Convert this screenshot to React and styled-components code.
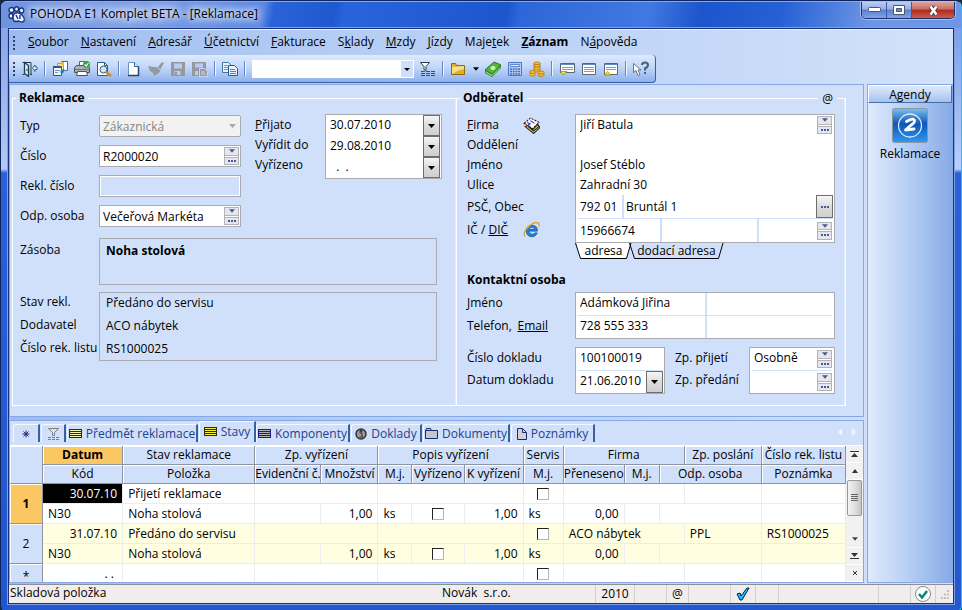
import React from "react";
import styled, { createGlobalStyle, css } from "styled-components";

const GlobalStyle = createGlobalStyle`
  *, *::before, *::after { box-sizing: border-box; }
  body { margin: 0; background: #1b2440; }
  body, button, input, select, table {
    font-family: "Open Sans", "Noto Sans", sans-serif;
    font-size: 12px;
    color: #000;
  }
  body { line-height: 16px; }
  button { border: 0; padding: 0; background: none; }
  svg { display: block; flex: none; }
`;

/* ---------- window frame ---------- */

const Window = styled.div`
  min-height: 100vh;
  display: flex;
  flex-direction: column;
  padding: 0 7px 7px;
  border: 1px solid #10245c;
  border-right-color: #19c8f0;
  border-bottom-color: #19b4e8;
  border-radius: 7px 7px 6px 6px;
  background:
    linear-gradient(#7f9fe6 0, #b4c8f4 168px, #2a60d8 172px, #1f56cc 100%) left / 7px 100% no-repeat,
    linear-gradient(#6f96e8 0, #bcd0f6 168px, #2a60d8 172px, #2458cf 100%) right / 7px 100% no-repeat,
    #2458cf;
`;

const TitleBar = styled.header`
  display: flex;
  align-items: center;
  height: 27px;
  margin: 0 -7px;
  padding: 0 7px;
  border-top: 1px solid #86a8ee;
  border-radius: 6px 6px 0 0;
  background: linear-gradient(100deg, #6f92de 0, #7fa0e6 130px, #5b86e2 260px, #2a62d8 270px, #2058cf 330px, #2a64da 340px, #1d56cc 500px, #2d66d8 512px, #4278e2 640px, #1d55cc 690px, #2560d4 770px, #6d96e6 860px, #6f96e6 100%);
`;

const AppTitle = styled.h1`
  flex: 1;
  display: flex;
  align-items: center;
  gap: 5px;
  margin: 0;
  font-size: 12px;
  line-height: 16px;
  padding-bottom: 2px;
  font-weight: 400;
  text-shadow: 0 0 6px #fff, 0 0 8px #dfe9ff, 0 0 10px #dfe9ff, 0 0 14px #c6d6fa;
`;

const WindowButtons = styled.div`
  display: flex;
  align-self: flex-start;
  margin-right: -1px;
  border: 1px solid #1c3166;
  border-top: 0;
  border-radius: 0 0 5px 5px;
  box-shadow: 0 0 0 1px #a9c1f2;
  overflow: hidden;
`;

const WindowButton = styled.button`
  display: grid;
  place-items: center;
  width: ${(p) => (p.$close ? 42 : 25)}px;
  height: 16px;
  border-right: ${(p) => (p.$close ? "0" : "1px solid #3b5ba2")};
  background: ${(p) =>
    p.$close
      ? "linear-gradient(#dba59e 0, #c96d62 45%, #ab2a20 50%, #cf5c48 100%)"
      : "linear-gradient(#bccdf2 0, #95aee6 45%, #5a7fd0 50%, #82a3ea 100%)"};
`;

const Client = styled.div`
  flex: 1;
  display: flex;
  flex-direction: column;
  border: 1px solid #17317c;
  box-shadow: 0 0 0 1px #7f9fe4;
  background: linear-gradient(90deg, #9dbbee 0, #b4cdf4 35%, #c3d7f7 70%, #d3e2fa 100%);
`;

/* ---------- menu and toolbar ---------- */

const MenuBar = styled.nav`
  display: flex;
  align-items: center;
  height: 26px;
  padding-left: 4px;
  border-top: 1px solid #e9f1fe;
`;

const Grip = styled.span`
  width: 2px;
  height: 14px;
  margin-right: ${(p) => p.$gap}px;
  background: repeating-linear-gradient(#2e4274 0 2px, transparent 2px 4px);
`;

const MenuItem = styled.button`
  padding: 0 6px 1px;
  line-height: 18px;
  font-weight: ${(p) => (p.$strong ? 700 : 400)};
`;

const Toolbar = styled.div`
  display: flex;
  align-items: center;
  align-self: flex-start;
  height: 28px;
  padding: 0 3px 0 4px;
  border-right: 1px solid #3a5f9f;
  border-bottom: 1px solid #3a5f9f;
  border-radius: 0 4px 4px 0;
  background: linear-gradient(#dfeafd 0, #c2d7f8 45%, #8db1ec 100%);
`;

const ToolButton = styled.button`
  display: grid;
  place-items: center;
  width: ${(p) => (p.$narrow ? 13 : 22)}px;
  height: 22px;
`;

const ToolSeparator = styled.span`
  width: 2px;
  height: 15px;
  margin: 0 3px;
  border-left: 1px solid #5f86c6;
  border-right: 1px solid #f0f6ff;
`;

const FilterSelect = styled.div`
  display: grid;
  width: 162px;
  height: 18px;
  margin: 0 3px;
  background: #fff;
  select {
    grid-area: 1 / 1;
    appearance: none;
    border: 0;
    width: 100%;
    height: 18px;
    padding: 0 16px 0 4px;
    background: none;
  }
  svg {
    grid-area: 1 / 1;
    justify-self: end;
    align-self: center;
    margin-right: 1px;
    background: #cfdffa;
    pointer-events: none;
  }
`;

/* ---------- work area ---------- */

const Workspace = styled.div`
  flex: 1;
  display: grid;
  grid-template-columns: minmax(0, 1fr) 86px;
  gap: 3px;
  margin-top: 1px;
`;

const MainColumn = styled.main`
  display: flex;
  flex-direction: column;
  gap: 3px;
`;

const panel = css`
  border: 1px solid #84a9e6;
  background: #d1e0fa;
`;

const FormPanel = styled.form`
  ${panel}
  display: grid;
  grid-template-columns: 445px minmax(0, 1fr);
  padding: 5px 17px 10px 2px;
`;

const Group = styled.fieldset`
  position: relative;
  min-width: 0;
  margin: 0;
  padding: 8px 8px 0 7px;
  border: 1px solid #fdfeff;
  border-left-width: ${(p) => (p.$joined ? "0" : "1px")};
  box-shadow: inset -1px 0 #e2ebfb;
`;

const Legend = styled.legend`
  margin-left: -4px;
  padding: 0 3px;
  font-weight: 700;
`;

const CornerMark = styled.span`
  position: absolute;
  top: -15px;
  right: 8px;
  padding: 0 4px;
  background: #d1e0fa;
`;

const SplitRow = styled.div`
  display: flex;
  align-items: flex-start;
  gap: 14px;
`;

const FieldStack = styled.div`
  display: flex;
  flex-direction: column;
  gap: 8px;
  width: 221px;
  padding-top: 1px;
`;

const FieldRow = styled.div`
  display: grid;
  grid-template-columns: 79px minmax(0, 1fr);
  align-items: center;
  height: 22px;
`;

const Label = styled.label`
  white-space: nowrap;
`;

const Box = styled.div`
  display: flex;
  align-items: stretch;
  height: 22px;
  border: 1px solid #a9abb0;
  border-radius: ${(p) => (p.$disabled ? 2 : 0)}px;
  padding: ${(p) => (p.$empty ? 0 : 1)}px;
  background: ${(p) => (p.$disabled ? "#f2f2f2" : p.$empty ? "#d1e0fa" : "#fff")};
  box-shadow: ${(p) => (p.$empty ? "inset 0 0 0 1px #fff" : "none")};
`;

const TextInput = styled.input`
  flex: 1;
  min-width: 0;
  width: 100%;
  border: 0;
  outline: 0;
  padding: 0 2px;
  background: transparent;
`;

const TypeSelect = styled.select`
  appearance: none;
  flex: 1;
  border: 0;
  padding: 0 2px;
  background: transparent;
  color: #858585;
  opacity: 1;
`;

const SelectArrow = styled.span`
  display: grid;
  place-items: center;
  width: 14px;
`;

const Dates = styled.div`
  display: grid;
  grid-template-columns: 70px 117px;
`;

const LabelColumn = styled.div`
  display: grid;
  align-content: start;
  align-items: center;
  padding-top: 1px;
  grid-template-rows: ${(p) => p.$rows};
`;

const Sheet = styled.div`
  display: grid;
  min-width: 0;
  border: 1px solid #a9abb0;
  background: #fff;
  padding: 0 2px;
  grid-template-rows: ${(p) => p.$rows};
  input { padding-bottom: ${(p) => (p.$raised ? 3 : 1)}px; }
`;

const SheetRow = styled.div`
  display: grid;
  min-width: 0;
  grid-template-columns: ${(p) => p.$cols || "minmax(0, 1fr)"};
  border-top: ${(p) => (p.$ruled ? "1px solid #d1e0fa" : "0")};
  > * + input { border-left: 2px solid #d1e0fa; }
`;

const DropButton = styled.button`
  display: grid;
  place-items: center;
  width: 17px;
  margin-right: -1px;
  border: 1px solid #6d6d6d;
  background: linear-gradient(#f6f6f6, #dcdcdc 50%, #cfcfcf);
`;

const SpinBox = styled.span`
  display: flex;
  flex-direction: column;
  gap: 1px;
  align-self: ${(p) => (p.$top ? "start" : "center")};
  width: 15px;
  height: 18px;
  margin-top: ${(p) => (p.$top ? 1 : 0)}px;
  border-left: 1px solid #b4b4b8;
  border-right: 1px solid #b4b4b8;
  button {
    flex: 1;
    display: grid;
    place-items: center;
    border-top: 1px solid #b4b4b8;
    border-bottom: 1px solid #b4b4b8;
    background: #e6e7ec;
  }
`;

const InfoGrid = styled.div`
  display: grid;
  grid-template-columns: 79px minmax(0, 1fr);
  row-gap: 7px;
  margin-top: 11px;
  width: 417px;
`;

const InfoLabels = styled.div`
  display: flex;
  flex-direction: column;
  line-height: 23px;
  white-space: nowrap;
`;

const InfoBox = styled.div`
  padding: 0 6px;
  border: 1px solid #a9abb0;
  line-height: 23px;
  height: ${(p) => (p.$tall ? 69 : 47)}px;
  font-weight: ${(p) => (p.$strong ? 700 : 400)};
  white-space: nowrap;
`;

const InfoLine = styled.div`
  height: 23px;
  margin-top: ${(p) => (p.$first ? -2 : 0)}px;
`;

const CustomerGrid = styled.div`
  display: grid;
  grid-template-columns: 108px minmax(0, 1fr);
  margin: 0 2px ${(p) => p.$gap || 0}px 3px;
`;

const LabelWithIcon = styled.div`
  display: flex;
  align-items: center;
  width: ${(p) => (p.$wide ? 81 : 73)}px;
  white-space: nowrap;
  justify-content: space-between;
`;

const InlineLink = styled.a`
  color: #000;
  text-decoration: underline;
`;

const NoteTabs = styled.div`
  display: flex;
  margin: 0 0 12px 111px;
`;

const NoteTab = styled.button`
  display: grid;
  justify-items: center;
  width: ${(p) => p.$w}px;
  height: 17px;
  margin-right: -3px;
  line-height: 15px;
  svg, span { grid-area: 1 / 1; }
`;

const SubHeading = styled.h2`
  margin: 0 3px 4px;
  font-size: 12px;
  line-height: 16px;
  font-weight: 700;
`;

const DocumentRow = styled.div`
  display: grid;
  grid-template-columns: 108px 90px 84px minmax(0, 1fr);
  margin: 0 2px 11px 3px;
`;

const ShiftedLabels = styled(LabelColumn)`
  padding-left: 10px;
`;

/* ---------- item list ---------- */

const ListPanel = styled.section`
  ${panel}
  flex: 1;
  display: flex;
  flex-direction: column;
`;

const TabStrip = styled.div`
  display: flex;
  align-items: flex-end;
  height: 25px;
  padding: 0 0 3px 3px;
  border-bottom: 1px solid #fff;
`;

const ListTab = styled.button`
  display: flex;
  align-items: center;
  justify-content: center;
  gap: 4px;
  width: ${(p) => p.$w}px;
  height: ${(p) => (p.$active ? 21 : 18)}px;
  margin-right: ${(p) => (p.$active ? 0 : 1)}px;
  padding-bottom: ${(p) => (p.$active ? 1 : 0)}px;
  border: 1px solid #f4f8ff;
  border-bottom: 0;
  border-right: 2px solid #3a619f;
  border-radius: 3px 0 0 0;
  color: #24418c;
  white-space: nowrap;
`;

const TabArrows = styled.span`
  display: flex;
  gap: 10px;
  margin: 0 7px 6px auto;
`;

const ListBody = styled.div`
  flex: 1;
  display: grid;
  grid-template-columns: minmax(0, 1fr) 17px;
`;

const TableViewport = styled.div`
  contain: size;
  min-height: 136px;
  overflow: hidden;
  background: #fff;
`;

const Table = styled.table`
  width: 100%;
  table-layout: fixed;
  border-collapse: separate;
  border-spacing: 0;
  line-height: 16px;
`;

const HeadCell = styled.th`
  height: 19px;
  padding: 0;
  overflow: hidden;
  white-space: nowrap;
  font-weight: ${(p) => (p.$current ? 700 : 400)};
  background: ${(p) => (p.$current ? "#fbc763" : "#d1e0fa")};
  border-right: 1px solid #8f949e;
  border-bottom: 1px solid #8f949e;
  box-shadow: inset 1px 1px #fff;
`;

const Cell = styled.td`
  height: ${(p) => p.$h || 20}px;
  padding: 0 5px;
  overflow: hidden;
  white-space: nowrap;
  text-align: ${(p) => p.$align || "left"};
  color: ${(p) => (p.$picked ? "#fff" : "#000")};
  background: ${(p) => (p.$picked ? "#000" : p.$tint ? "#fffee0" : "#fff")};
  border-right: 1px solid #ececee;
  border-bottom: 1px solid #ececee;
`;

const CheckBox = styled.input`
  appearance: none;
  display: block;
  width: 12px;
  height: 12px;
  margin: 0 auto;
  border: 1px solid #b5b5b5;
  border-top: 1px solid #222;
  border-left: 1px solid #222;
  background: #fff;
`;

const ScrollBar = styled.div`
  display: flex;
  flex-direction: column;
  align-items: center;
  background: #f1f1f2;
`;

const ScrollButton = styled.button`
  display: grid;
  place-items: center;
  width: 100%;
  height: 17px;
  border-bottom: 1px solid #fff;
`;

const ScrollThumb = styled.div`
  display: grid;
  place-items: center;
  width: 15px;
  height: 36px;
  margin-bottom: 15px;
  border: 1px solid #98989c;
  border-radius: 2px;
  background: linear-gradient(90deg, #f4f4f4, #e0e0e2 50%, #c6c6ca);
`;

/* ---------- side bar ---------- */

const SideBar = styled.aside`
  display: flex;
  flex-direction: column;
  align-items: center;
  border: 1px solid #84a9e6;
  background: linear-gradient(90deg, #dfeafd, #b9d0f5 45%, #86abe8);
`;

const SideHeading = styled.h2`
  width: 100%;
  height: 18px;
  margin: 0 0 5px;
  border: 1px solid #4d6ea5;
  border-top-color: #fff;
  border-left-color: #fff;
  background: linear-gradient(#dfeafd, #a5c2f0);
  font-size: 12px;
  line-height: 17px;
  font-weight: 400;
  text-align: center;
`;

const AgendaButton = styled.button`
  display: flex;
  flex-direction: column;
  align-items: center;
  gap: 2px;
`;

/* ---------- status bar ---------- */

const StatusBar = styled.footer`
  display: flex;
  height: 19px;
  margin-top: 1px;
  border-top: 1px solid #8d8f98;
  background: #f1edec;
  line-height: 16px;
`;

const StatusCell = styled.div`
  display: flex;
  align-items: center;
  justify-content: center;
  width: ${(p) => p.$w}px;
  border-left: 1px solid #d2cfce;
`;

const StatusText = styled.div`
  flex: 1;
  display: grid;
  grid-template-columns: 432px minmax(0, 1fr);
  padding-left: 1px;
  white-space: pre;
`;

/* ---------- drawings ---------- */

const Down = ({ fill = "#000", w = 7 }) => (
  <svg width={w} height="4" viewBox="0 0 7 4">
    <path d="M0 0h7L3.500 4z" fill={fill} />
  </svg>
);

const Dots = () => (
  <svg width="8" height="2" viewBox="0 0 8 2">
    <path d="M0 0h2v2H0zM3 0h2v2H3zM6 0h2v2H6z" fill="#47599c" />
  </svg>
);

const Icon = ({ children, size = 16 }) => (
  <svg width={size} height={size} viewBox="0 0 16 16">{children}</svg>
);

const icons = {
  door: (
    <Icon>
      <path d="M.500 1.500h8.500V13M.500 13.500h2M8 13.500h2" fill="none" stroke="#1f3d52" />
      <path d="M2.500 1.500l4 3v11l-4-3z" fill="#dfeaf0" stroke="#1f3d52" strokeWidth="1.300" />
      <path d="M5 8v2" stroke="#1f3d52" />
      <path d="M10.500 7L13 4v2h2v2.500h-2v2z" fill="#fff" stroke="#2d6680" />
    </Icon>
  ),
  agendas: (
    <Icon>
      <path d="M9.500.500h6v9h-3" fill="#fff" stroke="#3a6ab0" />
      <path d="M5.500 2.500h6v9h-6z" fill="#ffe98a" stroke="#a9a050" />
      <path d="M9 1h3v3H9zM5 4h3v2H5z" fill="#f3ba1e" />
      <path d="M1.500 5.500h8v9h-8z" fill="#eef5fc" stroke="#2e5a94" />
      <path d="M1 5h9v2H1z" fill="#2e5a94" />
      <path d="M3 9h5v1H3zM3 11h3v1H3z" fill="#6c9acb" />
      <path d="M8 11l3-3 2 1-3 4z" fill="#2c7ab5" />
    </Icon>
  ),
  printer: (
    <Icon>
      <path d="M5.500.500h6v5h-6z" fill="#fff" stroke="#59636e" />
      <path d="M.500 6.500l2-2h11l2 2v5H.500z" fill="#a9b0b8" stroke="#4a525c" />
      <path d="M1 8h14v1H1z" fill="#6b747e" />
      <path d="M3.500 10.500h9l1 4h-11z" fill="#fff" stroke="#4a525c" />
      <circle cx="12.500" cy="3.500" r="3.500" fill="#38a048" />
      <path d="M10.700 3.500l1.500 1.600L14.500 2" fill="none" stroke="#fff" strokeWidth="1.200" />
    </Icon>
  ),
  preview: (
    <Icon>
      <path d="M1.500 1.500h7l3 3v10h-10z" fill="#fff" stroke="#2e5a94" />
      <path d="M8.500 1.500v3h3" fill="none" stroke="#2e5a94" />
      <circle cx="7.500" cy="8.500" r="3.500" fill="#cfeaf3" stroke="#3d5f75" />
      <path d="M10 11l5 4" stroke="#c98f28" strokeWidth="2.400" />
    </Icon>
  ),
  page: (
    <Icon>
      <path d="M2.500 1.500h6l4 4v9h-10z" fill="#fff" stroke="#6b93c8" />
      <path d="M8.500 1.500v4h4" fill="#d5e6f8" stroke="#39649e" />
      <path d="M2 14.500h10.500v-9" fill="none" stroke="#24466f" strokeWidth="1.500" />
    </Icon>
  ),
  brush: (
    <Icon>
      <path d="M0 5l5 1 5 0 4-5 2 1-4 7v2l-6 4-1-3-3-2z" fill="#96989d" />
      <path d="M9 6l3 3" stroke="#b7cdf2" />
    </Icon>
  ),
  disk: (
    <Icon>
      <path d="M1 1h14v14H1z" fill="#96989d" />
      <path d="M4 2.500h8v5H4zM4.500 10h6v4h-6z" fill="#b7cdf2" />
      <path d="M5 11h2v3H5z" fill="#96989d" />
    </Icon>
  ),
  diskPage: (
    <Icon>
      <path d="M0 1h14v14H0z" fill="#96989d" />
      <path d="M3 2.500h8v4H3zM3 10h3v4H3z" fill="#b7cdf2" />
      <path d="M7.500 7.500h5l3 3v5h-8z" fill="#96989d" stroke="#c6d8f5" />
      <path d="M9 11h4M9 13h5" stroke="#c6d8f5" />
    </Icon>
  ),
  copy: (
    <Icon>
      <path d="M.500 1.500h6l3 3v7h-9z" fill="#e6f2fc" stroke="#41779f" />
      <path d="M2 4.500h4M2 6.500h5M2 8.500h5" stroke="#68a0c8" />
      <path d="M6.500 4.500h6l3 3v7h-9z" fill="#e6f2fc" stroke="#2e5a94" />
      <path d="M8 8.500h5M8 10.500h6M8 12.500h6" stroke="#4a88b8" />
    </Icon>
  ),
  filter: (
    <Icon>
      <path d="M.500 1.500h9l-3.500 4v4l-2-1v-3z" fill="#fff" stroke="#27424e" />
      <path d="M1 10.500h14M1 12.500h14M1 14.500h14" stroke="#2f5669" strokeDasharray="4 1" />
    </Icon>
  ),
  folder: (
    <Icon>
      <path d="M1.500 13.500v-11h4l1 2h8v9z" fill="#dfae31" stroke="#8d6c16" />
      <path d="M2 13V6l12-1v3q-6 1-12 5z" fill="#f7df86" />
    </Icon>
  ),
  money: (
    <Icon>
      <path d="M0 9L9 1l7 3-9 9z" fill="#55b53c" stroke="#2a7421" />
      <path d="M0 9v3l7 4 9-9V4l-9 9z" fill="#2f8a2a" />
      <path d="M1 11l6 3.500 8-8" fill="none" stroke="#b6e59c" />
      <ellipse cx="8" cy="7" rx="2.500" ry="2" fill="#d3f3be" />
    </Icon>
  ),
  calculator: (
    <Icon>
      <path d="M1.500 1.500h13v13h-13z" fill="#b4cdf4" stroke="#4f78c4" />
      <path d="M3.500 3.500h9v2h-9z" fill="#e4eefc" stroke="#5f86cc" />
      <path d="M3 8h10M3 10.500h10M3 13h10" stroke="#4a70bd" strokeDasharray="2 .7" strokeWidth="1.500" />
    </Icon>
  ),
  coins: (
    <Icon>
      <g fill="#f6bd3a" stroke="#b3760e" strokeWidth=".8">
        <path d="M5 2v9h6V2z" />
        <ellipse cx="8" cy="2.500" rx="3" ry="1.500" />
        <ellipse cx="8" cy="5" rx="3" ry="1.500" />
        <ellipse cx="8" cy="7.500" rx="3" ry="1.500" />
        <ellipse cx="3.500" cy="13.500" rx="3" ry="1.500" />
        <ellipse cx="3.500" cy="11" rx="3" ry="1.500" />
        <ellipse cx="12" cy="14" rx="3.300" ry="1.500" />
        <ellipse cx="12" cy="11.500" rx="3.300" ry="1.500" />
      </g>
    </Icon>
  ),
  rowsDown: (
    <Icon>
      <path d="M1.500 2.500h14v9h-14z" fill="#fff" stroke="#5c6672" />
      <path d="M2 3.500h13" stroke="#5f8bd0" />
      <path d="M3 6.500h11M3 8.500h11" stroke="#8f979f" />
      <path d="M1 10.500h7L4.500 14z" fill="#f3e524" stroke="#776f10" strokeWidth=".6" />
    </Icon>
  ),
  rows: (
    <Icon>
      <path d="M1.500 2.500h13v11h-13z" fill="#fff" stroke="#5c6672" />
      <path d="M2 3.500h12" stroke="#5f8bd0" />
      <path d="M3 6.500h10M3 8.500h10M3 10.500h10" stroke="#8f979f" />
    </Icon>
  ),
  rowsUp: (
    <Icon>
      <path d="M1.500 2.500h13v11h-13z" fill="#fff" stroke="#5c6672" />
      <path d="M2 3.500h12" stroke="#5f8bd0" />
      <path d="M3 6.500h10M3 8.500h10" stroke="#8f979f" />
      <path d="M1 14h7L4.500 10.500z" fill="#f3e524" stroke="#776f10" strokeWidth=".6" />
    </Icon>
  ),
  help: (
    <Icon>
      <path d="M.500 2.500v9l2.500-2 2 5 2-1-2-4.500h3z" fill="#fff" stroke="#4a5a6a" strokeWidth=".8" />
      <path d="M9 4q0-2.500 3-2.500t3 2.500q0 2-3 3.500v2M12 11v2" fill="none" stroke="#3d6480" strokeWidth="2" />
    </Icon>
  ),
  cards: (
    <Icon size={17}>
      <path d="M1 6l6-5 8 4-6 6z" fill="#fff" stroke="#222" strokeDasharray="2 1" />
      <path d="M4 5l3 2M7 3.500l4 2.500M5 7.500l2-2" stroke="#3344c4" />
      <path d="M2 9l3-1 4 4 5-5 2 3-6 5.500z" fill="#e4d832" stroke="#222" />
      <path d="M5 9l5 4 5-4" fill="none" stroke="#222" />
      <path d="M2 6l2 2" stroke="#d43a2a" />
    </Icon>
  ),
  browser: (
    <Icon size={17}>
      <path d="M13.500 9.500H5.500q.500 3 3.200 3 1.800 0 2.500-1.300h2.200q-1.400 3.600-5 3.600-5.200-.400-5.200-5.400Q3.500 4 8.500 4q5.200.300 5 5.500zM5.600 7.800h5.700Q11 5.700 8.500 5.700T5.600 7.800z" fill="#2a86d8" stroke="#1c5ea8" strokeWidth=".9" />
      <path d="M2 14.500Q-.500 11 5 5.500 11-.200 14.500 2q1.200 1 .200 3.200" fill="none" stroke="#e0a92a" strokeWidth="1.300" />
    </Icon>
  ),
  star: (
    <svg width="8" height="8" viewBox="0 0 8 8">
      <path d="M4 .5v7M.5 4h7M1.500 1.500l5 5M6.500 1.500l-5 5" stroke="#141c70" strokeWidth=".9" />
    </svg>
  ),
  smallFilter: (
    <svg width="13" height="12" viewBox="0 0 13 12">
      <path d="M1.500.500h10l-4 4v3h-2v-3z" fill="#e4e4e4" stroke="#7d7d7d" />
      <path d="M1 9.500h11M1 11.500h11" stroke="#7d7d7d" strokeDasharray="3 1" />
    </svg>
  ),
  info: (
    <svg width="12" height="12" viewBox="0 0 12 12">
      <circle cx="6" cy="6" r="5" fill="#9b9b9b" stroke="#333" strokeWidth="1.500" />
      <path d="M5 2.500h2v1.300H5zM4.500 5H7v3.500h1M4.500 9h3.500" fill="none" stroke="#333" />
    </svg>
  ),
  tabFolder: (
    <svg width="13" height="11" viewBox="0 0 13 11">
      <path d="M.500 2.500l1-2h4l1 2h6v8H.500zM.500 2.500h6" fill="#c3c7cf" stroke="#1a2a68" />
    </svg>
  ),
  tabPage: (
    <svg width="10" height="12" viewBox="0 0 10 12">
      <path d="M.500.500h5l4 4v7h-9zM5.500.500v4h4" fill="#d0d2d8" stroke="#1a2a68" />
    </svg>
  ),
};

const Grid = ({ fill, line = "#1a2080" }) => (
  <svg width="13" height="9" viewBox="0 0 13 9">
    <path d="M0 0h13v9H0z" fill={line} />
    <path d="M1 1h11v1H1zM1 3h11v1H1zM1 5h11v1H1zM1 7h11v1H1z" fill={fill} />
  </svg>
);

const NoteShape = ({ w, fill }) => (
  <svg width={w} height="17" viewBox={`0 0 ${w} 17`}>
    <path d={`M.500 0l5 15.500h${w - 11}L${w - 1} 0`} fill={fill} stroke="#000" />
  </svg>
);

const Logo = () => (
  <svg width="17" height="17" viewBox="0 0 17 17">
    <g fill="#edf2ff" stroke="#1d3480" strokeWidth="1.400">
      <ellipse cx="3.500" cy="4" rx="2.500" ry="2.500" />
      <ellipse cx="8.500" cy="3" rx="2" ry="2.200" />
      <ellipse cx="13.500" cy="4.500" rx="2.200" ry="2.500" />
      <ellipse cx="3" cy="10" rx="2" ry="2.500" />
      <path d="M6 8q4-3 8 1 3 3 2 6-2 2-5 0-3 1-5 0-2-3 0-7z" />
      <path d="M8 9l2 4M12 9v4" fill="none" />
    </g>
  </svg>
);

const AgendaIcon = () => (
  <svg width="36" height="35" viewBox="0 0 36 35">
    <defs>
      <linearGradient id="agenda" x2="0" y2="1">
        <stop stopColor="#7cc0f2" />
        <stop offset=".45" stopColor="#0e56b8" />
        <stop offset="1" stopColor="#2f9bf0" />
      </linearGradient>
    </defs>
    <rect x=".5" y=".5" width="35" height="34" rx="2" fill="url(#agenda)" stroke="#8c96a3" />
    <circle cx="18" cy="17.500" r="11.500" fill="none" stroke="#dcebfb" strokeWidth="1.300" />
    <path d="M14.500 13.500l3-1.500q5-2 5 1 0 2-4 4.500l-5 4.500 8.500-1" fill="none" stroke="#fff" strokeWidth="2.800" strokeLinecap="round" strokeLinejoin="round" />
  </svg>
);

const CheckMark = () => (
  <svg width="14" height="14" viewBox="0 0 14 14">
    <path d="M1 7l3-1 1 3 6-8h2L6 13H4z" fill="#1ac3ea" stroke="#0b1566" />
  </svg>
);

const StatusOk = () => (
  <svg width="16" height="16" viewBox="0 0 16 16">
    <circle cx="8" cy="8" r="7.500" fill="#fff" stroke="#7e8c8c" />
    <path d="M4 8l3 3.500L12 5" fill="none" stroke="#0e8378" strokeWidth="2.500" />
  </svg>
);

const SizeGrip = () => (
  <svg width="9" height="9" viewBox="0 0 9 9">
    <path d="M7 0h2v2H7zM4 3.500h2v2H4zM7 3.500h2v2H7zM1 7h2v2H1zM4 7h2v2H4zM7 7h2v2H7z" fill="#c2bfbd" />
  </svg>
);

/* ---------- composed controls ---------- */

const Spin = ({ name, top }) => (
  <SpinBox $top={top}>
    <button type="button" aria-label={`${name}: nabídka`}><Down fill="#47599c" w={6} /></button>
    <button type="button" aria-label={`${name}: výběr`}><Dots /></button>
  </SpinBox>
);

const Drop = ({ name }) => (
  <DropButton type="button" aria-label={`${name}: kalendář`}><Down /></DropButton>
);

const Hot = ({ text, at = 0 }) => (
  <>{text.slice(0, at)}<u>{text[at]}</u>{text.slice(at + 1)}</>
);

const menu = [
  ["Soubor", 0], ["Nastavení", 0], ["Adresář", 0], ["Účetnictví", 0], ["Fakturace", 0], ["Sklady", 1],
  ["Mzdy", 0], ["Jízdy", 0], ["Majetek", 4], ["Záznam", 0, true], ["Nápověda", 1],
];

const tools = [
  ["door", "Konec"], null, ["agendas", "Agendy"], ["printer", "Tisk"], ["preview", "Náhled"], null,
  ["page", "Nový"], ["brush", "Vložit"], ["disk", "Uložit"], ["diskPage", "Uložit kopii"], null, ["copy", "Kopírovat"], null,
];

const toolsAfter = [
  ["money", "Pokladna"], ["calculator", "Kalkulačka"], ["coins", "Banka"], null,
  ["rowsDown", "Další"], ["rows", "Záznamy"], ["rowsUp", "Předchozí"], null, ["help", "Nápověda k prvku"],
];

const ToolSet = ({ items }) =>
  items.map((item, i) =>
    item ? (
      <ToolButton key={i} type="button" aria-label={item[1]}>{icons[item[0]]}</ToolButton>
    ) : (
      <ToolSeparator key={i} />
    )
  );

const columnWidths = [33, 80, 132, 66, 57, 34, 52, 59, 40, 61, 35, 25, 77, 84];
const columnTotal = columnWidths.reduce((a, b) => a + b, 0);

const records = [
  { no: "1", date: "30.07.10", state: "Přijetí reklamace", firm: "", post: "", sheet: "", current: true },
  { no: "2", date: "31.07.10", state: "Předáno do servisu", firm: "ACO nábytek", post: "PPL", sheet: "RS1000025", tint: true },
];

const Record = ({ r }) => (
  <>
    <tr>
      <HeadCell rowSpan={2} scope="row" $current={r.current}>{r.no}</HeadCell>
      <Cell $align="right" $picked={r.current} $tint={r.tint}>{r.date}</Cell>
      <Cell $tint={r.tint}>{r.state}</Cell>
      <Cell colSpan={2} $tint={r.tint} />
      <Cell colSpan={3} $tint={r.tint} />
      <Cell $tint={r.tint}><CheckBox type="checkbox" aria-label="Servis" /></Cell>
      <Cell colSpan={3} $tint={r.tint}>{r.firm}</Cell>
      <Cell $tint={r.tint}>{r.post}</Cell>
      <Cell $tint={r.tint}>{r.sheet}</Cell>
    </tr>
    <tr>
      <Cell $tint={r.tint}>N30</Cell>
      <Cell $tint={r.tint}>Noha stolová</Cell>
      <Cell $tint={r.tint} />
      <Cell $align="right" $tint={r.tint}>1,00</Cell>
      <Cell $tint={r.tint}>ks</Cell>
      <Cell $tint={r.tint}><CheckBox type="checkbox" aria-label="Vyřízeno" /></Cell>
      <Cell $align="right" $tint={r.tint}>1,00</Cell>
      <Cell $tint={r.tint}>ks</Cell>
      <Cell $align="right" $tint={r.tint}>0,00</Cell>
      <Cell $tint={r.tint} />
      <Cell colSpan={2} $tint={r.tint} />
      <Cell $tint={r.tint} />
    </tr>
  </>
);

const ClaimGroup = () => (
  <Group>
    <Legend>Reklamace</Legend>
    <SplitRow>
      <FieldStack>
        <FieldRow>
          <Label htmlFor="typ">Typ</Label>
          <Box $disabled>
            <TypeSelect id="typ" disabled defaultValue="z"><option value="z">Zákaznická</option></TypeSelect>
            <SelectArrow><Down fill="#a8a8a8" /></SelectArrow>
          </Box>
        </FieldRow>
        <FieldRow>
          <Label htmlFor="cislo">Číslo</Label>
          <Box><TextInput id="cislo" defaultValue="R2000020" /><Spin name="Číslo" /></Box>
        </FieldRow>
        <FieldRow>
          <Label htmlFor="rekl">Rekl. číslo</Label>
          <Box $empty><TextInput id="rekl" /></Box>
        </FieldRow>
        <FieldRow>
          <Label htmlFor="osoba">Odp. osoba</Label>
          <Box><TextInput id="osoba" defaultValue="Večeřová Markéta" /><Spin name="Odp. osoba" /></Box>
        </FieldRow>
      </FieldStack>
      <Dates>
        <LabelColumn $rows="repeat(3, 20px)">
          <Label htmlFor="prijato"><Hot text="Přijato" /></Label>
          <Label htmlFor="vyriditDo">Vyřídit do</Label>
          <Label htmlFor="vyrizeno">Vyřízeno</Label>
        </LabelColumn>
        <Sheet $rows="repeat(3, 21px)" $raised>
          <SheetRow $cols="minmax(0, 1fr) auto"><TextInput id="prijato" defaultValue="30.07.2010" /><Drop name="Přijato" /></SheetRow>
          <SheetRow $cols="minmax(0, 1fr) auto"><TextInput id="vyriditDo" defaultValue="29.08.2010" /><Drop name="Vyřídit do" /></SheetRow>
          <SheetRow $cols="minmax(0, 1fr) auto"><TextInput id="vyrizeno" defaultValue="  .  ." /><Drop name="Vyřízeno" /></SheetRow>
        </Sheet>
      </Dates>
    </SplitRow>
    <InfoGrid>
      <InfoLabels>Zásoba</InfoLabels>
      <InfoBox $strong>Noha stolová</InfoBox>
      <InfoLabels>
        <InfoLine $first>Stav rekl.</InfoLine><InfoLine>Dodavatel</InfoLine><InfoLine>Číslo rek. listu</InfoLine>
      </InfoLabels>
      <InfoBox $tall>
        <InfoLine $first>Předáno do servisu</InfoLine><InfoLine>ACO nábytek</InfoLine><InfoLine>RS1000025</InfoLine>
      </InfoBox>
    </InfoGrid>
  </Group>
);

const CustomerGroup = () => (
  <Group $joined>
    <Legend>Odběratel</Legend>
    <CornerMark>@</CornerMark>
    <CustomerGrid>
      <LabelColumn $rows="repeat(4, 20px) repeat(2, 23px)">
        <LabelWithIcon><Label htmlFor="firma"><Hot text="Firma" /></Label>{icons.cards}</LabelWithIcon>
        <Label htmlFor="oddeleni">Oddělení</Label>
        <Label htmlFor="jmeno">Jméno</Label>
        <Label htmlFor="ulice">Ulice</Label>
        <Label htmlFor="psc">PSČ, Obec</Label>
        <LabelWithIcon><Label htmlFor="ic">IČ / <InlineLink href="#dic">DIČ</InlineLink></Label>{icons.browser}</LabelWithIcon>
      </LabelColumn>
      <Sheet $rows="repeat(4, 20px) 23px 24px">
        <SheetRow $cols="minmax(0, 1fr) auto"><TextInput id="firma" defaultValue="Jiří Batula" /><Spin name="Firma" top /></SheetRow>
        <SheetRow><TextInput id="oddeleni" /></SheetRow>
        <SheetRow><TextInput id="jmeno" defaultValue="Josef Stéblo" /></SheetRow>
        <SheetRow><TextInput id="ulice" defaultValue="Zahradní 30" /></SheetRow>
        <SheetRow $cols="44px minmax(0, 1fr) auto">
          <TextInput id="psc" defaultValue="792 01" />
          <TextInput aria-label="Obec" defaultValue="Bruntál 1" />
          <DropButton type="button" aria-label="Výběr obce"><Dots /></DropButton>
        </SheetRow>
        <SheetRow $ruled $cols="82px 97px minmax(0, 1fr) auto">
          <TextInput id="ic" defaultValue="15966674" />
          <TextInput aria-label="DIČ" />
          <TextInput aria-label="DIČ skupiny" />
          <Spin name="DIČ" />
        </SheetRow>
      </Sheet>
    </CustomerGrid>
    <NoteTabs>
      <NoteTab type="button" $w={57}><NoteShape w={57} fill="#fff" /><span>adresa</span></NoteTab>
      <NoteTab type="button" $w={95}><NoteShape w={95} fill="none" /><span>dodací adresa</span></NoteTab>
    </NoteTabs>
    <SubHeading>Kontaktní osoba</SubHeading>
    <CustomerGrid $gap={8}>
      <LabelColumn $rows="20px 25px">
        <Label htmlFor="kJmeno">Jméno</Label>
        <LabelWithIcon $wide><Label htmlFor="telefon">Telefon,</Label><InlineLink href="#email">Email</InlineLink></LabelWithIcon>
      </LabelColumn>
      <Sheet $rows="22px 23px" $raised>
        <SheetRow $cols="repeat(2, minmax(0, 1fr))"><TextInput id="kJmeno" defaultValue="Adámková Jiřina" /><TextInput aria-label="Funkce" /></SheetRow>
        <SheetRow $ruled $cols="repeat(2, minmax(0, 1fr))"><TextInput id="telefon" defaultValue="728 555 333" /><TextInput aria-label="Email" /></SheetRow>
      </Sheet>
    </CustomerGrid>
    <DocumentRow>
      <LabelColumn $rows="20px 24px">
        <Label htmlFor="doklad">Číslo dokladu</Label>
        <Label htmlFor="datum">Datum dokladu</Label>
      </LabelColumn>
      <Sheet $rows="22px 23px" $raised>
        <SheetRow><TextInput id="doklad" defaultValue="100100019" /></SheetRow>
        <SheetRow $ruled $cols="minmax(0, 1fr) auto"><TextInput id="datum" defaultValue="21.06.2010" /><Drop name="Datum dokladu" /></SheetRow>
      </Sheet>
      <ShiftedLabels $rows="20px 24px">
        <Label htmlFor="prijeti">Zp. přijetí</Label>
        <Label htmlFor="predani">Zp. předání</Label>
      </ShiftedLabels>
      <Sheet $rows="22px 23px" $raised>
        <SheetRow $cols="minmax(0, 1fr) auto"><TextInput id="prijeti" defaultValue="Osobně" /><Spin name="Zp. přijetí" /></SheetRow>
        <SheetRow $ruled $cols="minmax(0, 1fr) auto"><TextInput id="predani" /><Spin name="Zp. předání" /></SheetRow>
      </Sheet>
    </DocumentRow>
  </Group>
);

const ItemList = () => (
  <ListPanel>
    <TabStrip>
      <ListTab type="button" $w={27} aria-label="Nový záznam">{icons.star}</ListTab>
      <ListTab type="button" $w={25} aria-label="Filtr">{icons.smallFilter}</ListTab>
      <ListTab type="button" $w={131}><Grid fill="#f6f4b0" />Předmět reklamace</ListTab>
      <ListTab type="button" $w={57} $active><Grid fill="#f8ef30" line="#2a2a20" />Stavy</ListTab>
      <ListTab type="button" $w={94}><Grid fill="#b0b0b0" />Komponenty</ListTab>
      <ListTab type="button" $w={71}>{icons.info}Doklady</ListTab>
      <ListTab type="button" $w={87}>{icons.tabFolder}Dokumenty</ListTab>
      <ListTab type="button" $w={84}>{icons.tabPage}Poznámky</ListTab>
      <TabArrows>
        <svg width="4" height="8" viewBox="0 0 4 8"><path d="M4 0v8L0 4z" fill="#f1f5fc" /></svg>
        <svg width="4" height="8" viewBox="0 0 4 8"><path d="M0 0v8l4-4z" fill="#f1f5fc" /></svg>
      </TabArrows>
    </TabStrip>
    <ListBody>
      <TableViewport>
        <Table>
          <colgroup>
            {columnWidths.map((w, i) => <col key={i} style={{ width: `${(w / columnTotal) * 100}%` }} />)}
          </colgroup>
          <thead>
            <tr>
              <HeadCell rowSpan={2} aria-label="Řádek" />
              <HeadCell $current>Datum</HeadCell>
              <HeadCell>Stav reklamace</HeadCell>
              <HeadCell colSpan={2}>Zp. vyřízení</HeadCell>
              <HeadCell colSpan={3}>Popis vyřízení</HeadCell>
              <HeadCell>Servis</HeadCell>
              <HeadCell colSpan={3}>Firma</HeadCell>
              <HeadCell>Zp. poslání</HeadCell>
              <HeadCell>Číslo rek. listu</HeadCell>
            </tr>
            <tr>
              <HeadCell>Kód</HeadCell>
              <HeadCell>Položka</HeadCell>
              <HeadCell>Evidenční č.</HeadCell>
              <HeadCell>Množství</HeadCell>
              <HeadCell>M.j.</HeadCell>
              <HeadCell>Vyřízeno</HeadCell>
              <HeadCell>K vyřízení</HeadCell>
              <HeadCell>M.j.</HeadCell>
              <HeadCell>Přeneseno</HeadCell>
              <HeadCell>M.j.</HeadCell>
              <HeadCell colSpan={2}>Odp. osoba</HeadCell>
              <HeadCell>Poznámka</HeadCell>
            </tr>
          </thead>
          <tbody>
            {records.map((r) => <Record key={r.no} r={r} />)}
            <tr>
              <HeadCell rowSpan={2} scope="row">*</HeadCell>
              <Cell $align="right">. .&nbsp;</Cell>
              <Cell />
              <Cell colSpan={2} />
              <Cell colSpan={3} />
              <Cell><CheckBox type="checkbox" aria-label="Servis" /></Cell>
              <Cell colSpan={3} />
              <Cell />
              <Cell />
            </tr>
            <tr><Cell colSpan={13} $h={6} /></tr>
          </tbody>
        </Table>
      </TableViewport>
      <ScrollBar>
        <ScrollButton type="button" aria-label="Na začátek">
          <svg width="9" height="6" viewBox="0 0 9 6"><path d="M0 0h9v1H0zM4.500 2L8 6H1z" fill="#333" /></svg>
        </ScrollButton>
        <ScrollButton type="button" aria-label="Nahoru">
          <svg width="6" height="4" viewBox="0 0 6 4"><path d="M3 0l3 4H0z" fill="#333" /></svg>
        </ScrollButton>
        <ScrollThumb>
          <svg width="7" height="8" viewBox="0 0 7 8"><path d="M0 0h7v1H0zM0 2h7v1H0zM0 4h7v1H0zM0 6h7v1H0z" fill="#666" /></svg>
        </ScrollThumb>
        <ScrollButton type="button" aria-label="Dolů"><Down fill="#444" w={6} /></ScrollButton>
        <ScrollButton type="button" aria-label="Na konec">
          <svg width="9" height="6" viewBox="0 0 9 6"><path d="M0 5h9v1H0zM4.500 4L8 0H1z" fill="#333" /></svg>
        </ScrollButton>
        <ScrollButton type="button" aria-label="Zavřít">
          <svg width="4" height="4" viewBox="0 0 4 4"><path d="M0 0l4 4M4 0L0 4" stroke="#333" /></svg>
        </ScrollButton>
      </ScrollBar>
    </ListBody>
  </ListPanel>
);

export default function App() {
  return (
    <Window>
      <GlobalStyle />
      <TitleBar>
        <AppTitle><Logo />POHODA E1 Komplet BETA - [Reklamace]</AppTitle>
        <WindowButtons>
          <WindowButton type="button" aria-label="Minimalizovat">
            <svg width="13" height="6" viewBox="0 0 13 6"><rect x=".5" y=".5" width="12" height="4" rx="1" fill="#fff" stroke="#4a5570" /></svg>
          </WindowButton>
          <WindowButton type="button" aria-label="Maximalizovat">
            <svg width="12" height="10" viewBox="0 0 12 10"><path d="M.500.500h11v9H.500z" fill="#fff" stroke="#4a5570" /><path d="M3.500 3.500h5v3h-5z" fill="#6e8cd0" stroke="#4a5570" /></svg>
          </WindowButton>
          <WindowButton type="button" aria-label="Zavřít okno" $close>
            <svg width="13" height="11" viewBox="0 0 13 11"><path d="M3.500 1.500l6 8M9.500 1.500l-6 8" stroke="#5a3a44" strokeWidth="4.500" /><path d="M3.500 1.500l6 8M9.500 1.500l-6 8" stroke="#fff" strokeWidth="2.500" /></svg>
          </WindowButton>
        </WindowButtons>
      </TitleBar>
      <Client>
        <MenuBar>
          <Grip $gap={7} />
          {menu.map(([text, at, strong]) => (
            <MenuItem key={text} type="button" $strong={strong}><Hot text={text} at={at} /></MenuItem>
          ))}
        </MenuBar>
        <Toolbar>
          <Grip $gap={4} />
          <ToolSet items={tools} />
          <FilterSelect>
            <select aria-label="Filtr záznamů" />
            <svg width="12" height="16" viewBox="0 0 12 16"><path d="M3 7h6L6 10z" fill="#000" /></svg>
          </FilterSelect>
          <ToolButton type="button" aria-label="Výběr">{icons.filter}</ToolButton>
          <ToolSeparator />
          <ToolButton type="button" aria-label="Složka">{icons.folder}</ToolButton>
          <ToolButton type="button" aria-label="Další složky" $narrow><Down w={6} /></ToolButton>
          <ToolSet items={toolsAfter} />
        </Toolbar>
        <Workspace>
          <MainColumn>
            <FormPanel>
              <ClaimGroup />
              <CustomerGroup />
            </FormPanel>
            <ItemList />
          </MainColumn>
          <SideBar>
            <SideHeading>Agendy</SideHeading>
            <AgendaButton type="button"><AgendaIcon />Reklamace</AgendaButton>
          </SideBar>
        </Workspace>
        <StatusBar>
          <StatusText><span>Skladová položka</span><span>Novák  s.r.o.</span></StatusText>
          <StatusCell $w={39}>2010</StatusCell>
          <StatusCell $w={32} />
          <StatusCell $w={22}>@</StatusCell>
          <StatusCell $w={42} />
          <StatusCell $w={25}><CheckMark /></StatusCell>
          <StatusCell $w={23} />
          <StatusCell $w={100} />
          <StatusCell $w={32} />
          <StatusCell $w={25}><StatusOk /></StatusCell>
          <StatusCell $w={18}><SizeGrip /></StatusCell>
        </StatusBar>
      </Client>
    </Window>
  );
}
